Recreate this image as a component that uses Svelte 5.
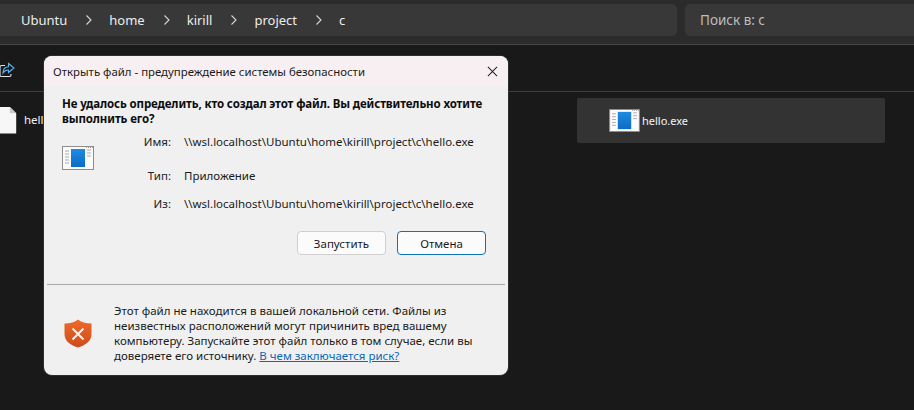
<script>
  const crumbs = ['Ubuntu', 'home', 'kirill', 'project', 'c'];
  const path = '\\\\wsl.localhost\\Ubuntu\\home\\kirill\\project\\c\\hello.exe';
  const rows = [
    { label: 'Имя:', value: path, cls: 'r1' },
    { label: 'Тип:', value: 'Приложение', cls: 'r2' },
    { label: 'Из:', value: path, cls: 'r3' }
  ];
</script>

{#snippet exeIcon(cls)}
  <svg class={cls} viewBox="0 0 32 24" aria-hidden="true">
    <defs>
      <linearGradient id="blue-{cls}" x1="0" y1="0" x2="0" y2="1">
        <stop offset="0" stop-color="#1f8be0" />
        <stop offset="1" stop-color="#0b6cc4" />
      </linearGradient>
    </defs>
    <rect x="0.5" y="0.5" width="31" height="23" fill="#fbfbfb" stroke="#8d8d8d" />
    <rect x="9" y="3" width="14" height="18" fill="url(#blue-{cls})" />
    <path d="M3 5h4M3 8h4M3 11h4M3 14h4M3 17h4M25 4h4M25 7h4M25 10h4" stroke="#a9a9a9" stroke-width="1" />
    <path d="M24 1.5h1M26 1.5h1M28 1.5h1M30 1.5h1" stroke="#9a9a9a" stroke-width="1" />
  </svg>
{/snippet}

<div class="window">
  <header class="top">
    <nav class="address">
      {#each crumbs as c, i}
        <span class="crumb">{c}</span>
        {#if i < crumbs.length - 1}
          <svg class="chev" viewBox="0 0 8 12" aria-hidden="true"><path d="M1.5 1.5 6 6l-4.5 4.5" /></svg>
        {/if}
      {/each}
    </nav>
    <div class="search">Поиск в: c</div>
  </header>

  <div class="toolbar">
    <svg class="share" viewBox="0 0 16 16" aria-hidden="true">
      <path class="tray" d="M6 3.500H2.500A1.500 1.500 0 0 0 1 5v8a1.500 1.500 0 0 0 1.500 1.500h8A1.500 1.500 0 0 0 12 13v-1" />
      <path class="arrow" d="M9.500 1.500 15 6l-5.500 4.500V8C7 8 5.200 9 4 11c0-3.600 2-6 5.500-6.200z" />
    </svg>
  </div>

  <main class="files">
    <div class="left-file">
      <svg class="doc" viewBox="0 0 20 30" aria-hidden="true">
        <path d="M0 0h11l7 7v22.500H0z" fill="#f7f7f7" />
        <path d="M11 0l7 7h-7z" fill="#c9c9c9" />
      </svg>
      <span>hello.exe</span>
    </div>
    <div class="selected">
      {@render exeIcon('icon-sel')}
      <span>hello.exe</span>
    </div>
  </main>

  <div class="dialog" role="dialog">
    <div class="title">
      <span>Открыть файл - предупреждение системы безопасности</span>
      <svg class="close" viewBox="0 0 12 12" aria-hidden="true"><path d="M1 1l10 10M11 1 1 11" /></svg>
    </div>
    <div class="body">
      <p class="question">Не удалось определить, кто создал этот файл. Вы действительно хотите выполнить его?</p>
      <div class="details">
        {@render exeIcon('icon-dlg')}
        <dl>
          {#each rows as r}
            <div class="row {r.cls}">
              <dt>{r.label}</dt>
              <dd>{r.value}</dd>
            </div>
          {/each}
        </dl>
      </div>
      <div class="buttons">
        <button class="btn">Запустить</button>
        <button class="btn primary">Отмена</button>
      </div>
    </div>
    <hr class="rule" />
    <div class="warning">
      <svg class="shield" viewBox="0 0 28 29" aria-hidden="true">
        <defs>
          <linearGradient id="sh" x1="0" y1="0" x2="0" y2="1">
            <stop offset="0" stop-color="#ee6a2a" />
            <stop offset="1" stop-color="#cf4a1c" />
          </linearGradient>
        </defs>
        <path d="M14 0.500c3 2.600 7.500 4 13.500 4v10.500c0 6.500-5 11-13.500 13.500C5.500 26 0.500 21.500 0.500 15V4.500C6.500 4.500 11 3.100 14 0.500z" fill="url(#sh)" />
        <path d="M8.500 9.500l11 11M19.500 9.500l-11 11" stroke="#fff3ea" stroke-width="2" fill="none" />
      </svg>
      <p>Этот файл не находится в вашей локальной сети. Файлы из неизвестных расположений могут причинить вред вашему компьютеру. Запускайте этот файл только в том случае, если вы доверяете его источнику. <a href="#risk">В чем заключается риск?</a></p>
    </div>
  </div>
</div>

<style>
  :global(body) {
    margin: 0;
    background: #191919;
  }
  .window {
    position: relative;
    width: 914px;
    height: 410px;
    overflow: hidden;
    background: #191919;
    font-family: "Noto Sans", "Open Sans", sans-serif;
    color: #fff;
  }
  .top {
    display: flex;
    gap: 8px;
    height: 45px;
    padding-top: 4px;
    box-sizing: border-box;
    background: #2b2b2b;
    border-bottom: 1px solid #454545;
  }
  .address {
    display: flex;
    align-items: center;
    flex: 0 0 677px;
    height: 32px;
    padding-left: 21px;
    box-sizing: border-box;
    background: #383838;
    border-radius: 0 5px 5px 0;
  }
  .crumb {
    font-size: 13px;
    color: #ededed;
  }
  .chev {
    width: 8px;
    height: 12px;
    margin: 0 16px 0 18px;
    fill: none;
    stroke: #d8d8d8;
    stroke-width: 1.100;
  }
  .search {
    flex: 1;
    height: 32px;
    padding-left: 15px;
    box-sizing: border-box;
    line-height: 32px;
    font-size: 13.500px;
    color: #bdbdbd;
    background: #383838;
    border-radius: 5px 0 0 5px;
  }
  .toolbar {
    height: 47px;
    padding-top: 17px;
    box-sizing: border-box;
    background: #191919;
    border-bottom: 1px solid #3f3f3f;
  }
  .share {
    display: block;
    width: 16px;
    height: 16px;
    margin-left: -1px;
    fill: none;
    stroke-width: 1.100;
  }
  .tray { stroke: #e4e4e4; }
  .arrow { stroke: #5cb4ee; }
  .files {
    display: flex;
    padding-top: 6px;
  }
  .left-file {
    display: flex;
    align-items: flex-start;
    flex: 0 0 577px;
    gap: 6px;
    padding-top: 8px;
    font-size: 11.500px;
    color: #f2f2f2;
  }
  .left-file span { line-height: 30px; margin-top: -1px; }
  .doc {
    width: 18px;
    height: 29px;
  }
  .selected {
    display: flex;
    align-items: center;
    width: 308px;
    height: 45px;
    padding-left: 32px;
    box-sizing: border-box;
    background: #333;
    border-radius: 2px;
    font-size: 11px;
    color: #f4f4f4;
  }
  .icon-sel {
    width: 31px;
    height: 23px;
    margin-right: 2px;
  }
  .dialog {
    position: absolute;
    left: 44px;
    top: 56px;
    width: 464px;
    height: 319px;
    display: flex;
    flex-direction: column;
    overflow: hidden;
    background: #f0f0f0;
    border-radius: 8px;
    color: #111;
    font-size: 11.500px;
    box-shadow: 0 0 0 1px #2e2e2e;
  }
  .title {
    display: flex;
    align-items: center;
    justify-content: space-between;
    flex: 0 0 30px;
    padding: 0 10px 0 9px;
    background: #f7eff1;
    font-size: 11.400px;
    color: #1a1a1a;
  }
  .close {
    width: 11px;
    height: 11px;
    fill: none;
    stroke: #222;
    stroke-width: 1.100;
  }
  .body {
    flex: 0 0 198px;
  }
  .question {
    margin: 10px 0 0 18px;
    width: 430px;
    font-size: 11.500px;
    letter-spacing: -0.12px;
    font-weight: 700;
    line-height: 15px;
    color: #0c0c0c;
  }
  .details {
    display: flex;
    margin-left: 18px;
    margin-top: 7px;
  }
  .icon-dlg {
    width: 32px;
    height: 24px;
    margin-top: 13px;
    flex: none;
  }
  dl { margin: 0; }
  .row {
    display: flex;
    align-items: center;
    height: 16px;
  }
  .r2 { margin-top: 18px; }
  .r3 { margin-top: 12px; }
  dt {
    width: 77px;
    text-align: right;
    color: #222;
  }
  dd {
    margin: 0 0 0 13px;
    color: #1a1a1a;
    white-space: nowrap;
  }
  .buttons {
    display: flex;
    justify-content: flex-end;
    gap: 11px;
    margin: 20px 22px 0 0;
  }
  .btn {
    width: 89px;
    height: 24px;
    padding: 0;
    font: inherit;
    font-size: 11.500px;
    color: #1a1a1a;
    background: #fbfbfb;
    border: 1px solid #cfcfcf;
    border-radius: 4px;
  }
  .primary {
    border: 1px solid #0f6fb8;
  }
  .rule {
    flex: none;
    height: 1px;
    margin: 0 3px;
    border: 0;
    background: #a8a8a8;
  }
  .warning {
    display: flex;
    flex: 1;
    padding: 18px 0 0 20px;
  }
  .shield {
    flex: none;
    width: 28px;
    height: 29px;
    margin-top: 16px;
  }
  .warning p {
    margin: 0 0 0 22px;
    width: 370px;
    line-height: 15px;
    font-size: 11.500px;
    color: #1a1a1a;
  }
  a {
    color: #0a68b8;
    text-decoration: underline;
  }
</style>
